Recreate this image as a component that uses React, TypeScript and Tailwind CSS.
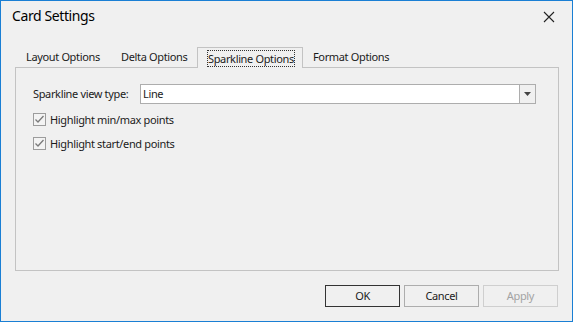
import React from "react";

function Check() {
  return (
    <div className="w-[13px] h-[13px] border border-[#9c9c9c] bg-[#f3f3f3] flex items-center justify-center shrink-0">
      <svg width="11" height="11" viewBox="0 0 11 11">
        <path d="M1.5 5.5 L4 8 L9.5 2" fill="none" stroke="#7a7a7a" strokeWidth="1.3" />
      </svg>
    </div>
  );
}

export default function App() {
  const font = { fontFamily: '"Segoe UI", "Noto Sans", sans-serif' };
  return (
    <div
      className="w-[573px] h-[322px] border border-[#1a7fd4] bg-[#f0f0f0] flex flex-col text-[11px] tracking-[-0.35px] text-[#1b1b1b] box-border whitespace-nowrap"
      style={font}
    >
      <div className="h-[30px] flex items-center justify-between pl-[11px] pr-[17px] shrink-0">
        <span className="text-[14px] tracking-[-0.4px] text-black leading-none">Card Settings</span>
        <svg width="12" height="12" viewBox="0 0 12 12" className="mt-[1px]">
          <path d="M1 1 L11 11 M11 1 L1 11" stroke="#222" strokeWidth="1.1" />
        </svg>
      </div>
      <div className="mt-[16px] ml-[14px] mr-[13px] flex flex-col">
        <div className="flex h-[20px] relative z-10">
          <div className="w-[95px] pl-[11px] pt-[2px] leading-[16px]">Layout Options</div>
          <div className="w-[87px] pl-[11px] pt-[2px] leading-[16px]">Delta Options</div>
          <div className="w-[106px] h-[21px] border border-b-0 border-[#c3c3c3] bg-[#f0f0f0] pl-[9px] pt-[2px]">
            <span className="inline-block border border-dotted border-[#333] leading-[15px]">Sparkline Options</span>
          </div>
          <div className="pl-[10px] pt-[2px] leading-[16px]">Format Options</div>
        </div>
        <div className="h-[204px] border border-[#c3c3c3] pt-[16px] pl-[17px] flex flex-col">
          <div className="flex items-center h-[20px]">
            <div className="w-[107px]">Sparkline view type:</div>
            <div className="w-[396px] h-[20px] border border-[#adadad] bg-white flex">
              <div className="flex-1 pl-[2px] leading-[18px]">Line</div>
              <div className="w-[16px] border-l border-[#adadad] bg-[#f0f0f0] flex items-center justify-center">
                <svg width="7" height="4" viewBox="0 0 7 4">
                  <path d="M0 0 L7 0 L3.5 4 Z" fill="#444" />
                </svg>
              </div>
            </div>
          </div>
          <div className="flex items-center h-[13px] mt-[9px] gap-[4px]">
            <Check />
            <span className="leading-[13px]">Highlight min/max points</span>
          </div>
          <div className="flex items-center h-[13px] mt-[11px] gap-[4px]">
            <Check />
            <span className="leading-[13px]">Highlight start/end points</span>
          </div>
        </div>
      </div>
      <div className="flex justify-end gap-[4px] mt-[14px] mr-[14px]">
        <button className="w-[75px] h-[22px] border border-[#333] bg-[#f0f0f0] text-[11px] text-[#1b1b1b]">OK</button>
        <button className="w-[75px] h-[22px] border border-[#adadad] bg-[#f0f0f0] text-[11px] text-[#1b1b1b]">Cancel</button>
        <button className="w-[75px] h-[22px] border border-[#cfcfcf] bg-[#f0f0f0] text-[11px] text-[#a3a3a3]">Apply</button>
      </div>
    </div>
  );
}
